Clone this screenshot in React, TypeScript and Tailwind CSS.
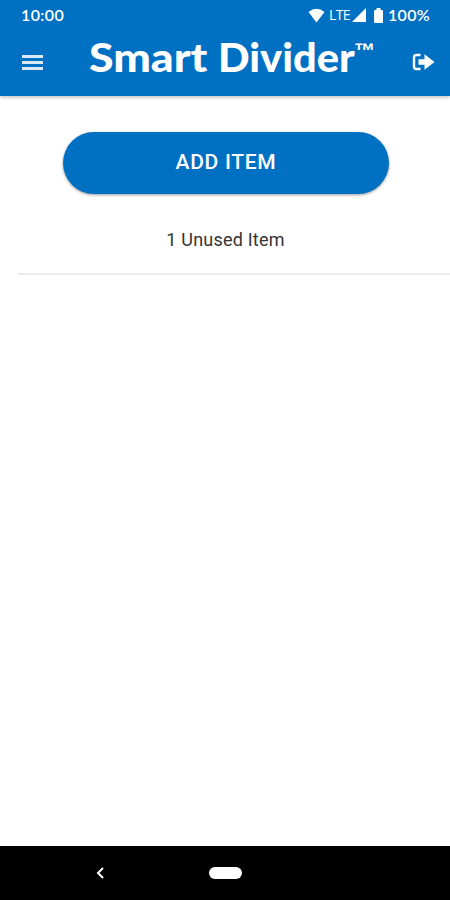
function StatusBar() {
  return (
    <div className="flex h-[30px] items-center justify-between pl-[21px] pr-[20px]">
      <span className="font-['Lato',sans-serif] text-[16px] font-semibold leading-none tracking-[0.4px]">10:00</span>
      <div className="flex items-center">
        <svg width="17" height="15" viewBox="0 0 17 15" fill="currentColor" className="mr-[4px]">
          <path d="M8.5 14.5 0.5 4Q8.5-2.5 16.5 4Z" />
        </svg>
        <span className="w-[22px] whitespace-nowrap font-['Open_Sans',sans-serif] text-[14px] leading-none tracking-[-0.6px]">LTE</span>
        <svg width="14" height="14" viewBox="0 0 14 14" fill="currentColor" className="ml-px mr-[8px]">
          <path d="M0 14 14 0v14Z" />
        </svg>
        <svg width="9" height="15" viewBox="0 0 9 15" fill="currentColor" className="mr-[5px]">
          <path d="M2.5 0h4v2H8a1 1 0 0 1 1 1v11a1 1 0 0 1-1 1H1a1 1 0 0 1-1-1V3a1 1 0 0 1 1-1h1.500Z" />
        </svg>
        <span className="font-['Lato',sans-serif] text-[16px] font-semibold leading-none tracking-[0.3px]">100%</span>
      </div>
    </div>
  );
}

function Header() {
  return (
    <header className="h-24 shrink-0 bg-[#0070c3] text-white shadow-[0_1px_4px_rgba(0,0,0,0.3)]">
      <StatusBar />
      <div className="flex h-[64px] items-center">
        <button className="ml-[22px] flex w-[21px] flex-col gap-[3px] pt-px" aria-label="Menu">
          <span className="h-[3px] w-full bg-white/85" />
          <span className="h-[3px] w-full bg-white/85" />
          <span className="h-[3px] w-full bg-white/85" />
        </button>
        <h1 className="ml-[46px] flex w-[323px] items-start whitespace-nowrap font-['Lato',sans-serif] text-[39px] font-black leading-[48px]">
          <span className="-mt-[11px] w-[129px] origin-left scale-x-[1.145]">Smart</span>
          <span className="-mt-[11px] w-[136px] origin-left scale-x-[1.065]">Divider</span>
          <span className="-mt-[7px] font-['Liberation_Sans',sans-serif] text-[21px] font-bold leading-[28px]">™</span>
        </h1>
        <button aria-label="Log out">
          <svg width="23" height="18" viewBox="0 0 23 18" fill="none">
            <path d="M8.500 2H4.500Q2 2 2 4.500v9Q2 16 4.500 16h4" stroke="currentColor" strokeWidth="2.400" />
            <path d="M6.500 6.200h6V1.200L22.500 9l-10 7.800v-5h-6Z" fill="currentColor" />
          </svg>
        </button>
      </div>
    </header>
  );
}

export default function App() {
  return (
    <div className="flex h-[900px] w-[450px] flex-col overflow-hidden bg-white font-['Roboto',sans-serif]">
      <Header />
      <main className="flex flex-1 flex-col">
        <button className="ml-[63px] mt-[36px] h-[62px] w-[326px] rounded-full bg-[#0070c3] text-[21px] font-medium tracking-[0.7px] text-white shadow-[0_1px_3px_rgba(0,0,0,0.4)]">
          ADD ITEM
        </button>
        <div className="ml-[18px] mt-[24px] h-[57px] border-b-2 border-[#ebebeb] pr-[17px] pt-[8px] text-center text-[18px] leading-[28px] tracking-[0.2px] text-[#333]">
          1 Unused Item
        </div>
      </main>
      <nav className="flex h-[54px] items-center bg-black text-white">
        <svg width="8" height="12" viewBox="0 0 8 12" fill="none" className="ml-[96px]">
          <path d="M7 1 2 6l5 5" stroke="currentColor" strokeWidth="2" />
        </svg>
        <span className="ml-[105px] h-3 w-[33px] rounded-full bg-white" />
      </nav>
    </div>
  );
}
